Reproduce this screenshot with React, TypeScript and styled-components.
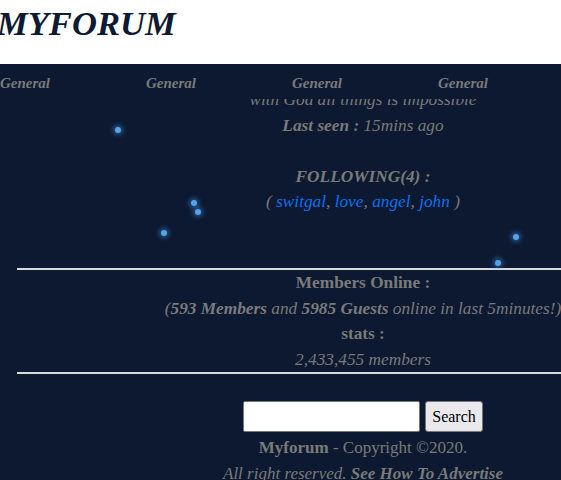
import React from "react";
import styled, { createGlobalStyle } from "styled-components";

const Global = createGlobalStyle`
  html, body { margin: 0; padding: 0; background: #ffffff; overflow: hidden; }
  body { font-family: "Liberation Serif", "Times New Roman", serif; }
`;

const Page = styled.div`
  width: 726px;
`;

const Header = styled.header`
  height: 64px;
  box-sizing: border-box;
  padding-top: 4px;
  background: #ffffff;
`;

const Title = styled.h1`
  margin: 0 0 0 -3px;
  font-size: 34.6px;
  line-height: 39px;
  font-style: italic;
  font-weight: bold;
  color: #0d1a33;
`;

const Main = styled.main`
  position: relative;
  background: #0c1931;
  min-height: 480px;
  color: #7a7a7a;
  font-size: 17.3px;
  line-height: 25.6px;
  text-align: center;
`;

const Nav = styled.nav`
  display: grid;
  grid-template-columns: repeat(4, 146px);
  height: 35px;
  box-sizing: border-box;
  padding: 8px 0 5px;
  align-items: center;
  position: relative;
  z-index: 1;
`;

const NavItem = styled.span`
  font-size: 15px;
  line-height: 22px;
  font-weight: bold;
  font-style: italic;
  text-align: left;
  color: #7a7a7a;
`;

const ProfileViewport = styled.div`
  overflow: hidden;
  padding-bottom: 53px;
`;

const Profile = styled.div`
  margin-top: -12px;
  font-style: italic;
`;

const Line = styled.div<{ $bold?: boolean }>`
  min-height: 25.6px;
  font-weight: ${(p) => (p.$bold ? "bold" : "normal")};
`;

const Link = styled.a`
  color: #0a72f0;
  text-decoration: none;
`;

const Rule = styled.hr`
  margin: 0 auto;
  width: 692px;
  border: none;
  height: 2px;
  background: #d9d9d9;
`;

const Stats = styled.section``;

const Footer = styled.footer`
  padding-top: 27px;
`;

const SearchRow = styled.form`
  display: flex;
  justify-content: center;
  align-items: center;
  gap: 5px;
  margin: 0 0 3px;
`;

const SearchInput = styled.input`
  width: 177px;
  height: 31px;
  box-sizing: border-box;
  border: 1px solid #767676;
  border-radius: 2px;
  background: #fff;
  font-family: inherit;
`;

const SearchButton = styled.button`
  height: 31px;
  box-sizing: border-box;
  padding: 0 6px;
  border: 1px solid #767676;
  border-radius: 3px;
  background: #e9e9ed;
  color: #000;
  font-family: "Liberation Serif", "Times New Roman", serif;
  font-size: 16px;
`;

const FooterLine = styled.div<{ $italic?: boolean }>`
  font-size: 17px;
  font-style: ${(p) => (p.$italic ? "italic" : "normal")};
`;

const Particle = styled.span`
  position: absolute;
  width: 6px;
  height: 6px;
  margin: -3px 0 0 -3px;
  border-radius: 50%;
  background: #55a2e4;
  box-shadow: 0 0 5px 2px rgba(60, 140, 220, 0.55);
`;

const particles = [
  [118, 66],
  [194, 139],
  [198, 148],
  [164, 169],
  [516, 173],
  [498, 199],
];

export default function App() {
  return (
    <Page>
      <Global />
      <Header>
        <Title>MYFORUM</Title>
      </Header>
      <Main>
        {particles.map(([x, y], i) => (
          <Particle key={i} style={{ left: x, top: y }} />
        ))}
        <Nav>
          <NavItem>General</NavItem>
          <NavItem>General</NavItem>
          <NavItem>General</NavItem>
          <NavItem>General</NavItem>
        </Nav>
        <ProfileViewport>
          <Profile>
            <Line>with God all things is impossible</Line>
            <Line>
              <b>Last seen :</b> 15mins ago
            </Line>
            <Line />
            <Line $bold>FOLLOWING(4) :</Line>
            <Line>
              ( <Link href="#">switgal</Link>, <Link href="#">love</Link>,{" "}
              <Link href="#">angel</Link>, <Link href="#">john</Link> )
            </Line>
          </Profile>
        </ProfileViewport>
        <Rule />
        <Stats>
          <Line $bold>Members Online :</Line>
          <Line>
            <i>
              (<b>593 Members</b> and <b>5985 Guests</b> online in last 5minutes!)
            </i>
          </Line>
          <Line $bold>stats :</Line>
          <Line>
            <i>2,433,455 members</i>
          </Line>
        </Stats>
        <Rule />
        <Footer>
          <SearchRow onSubmit={(e) => e.preventDefault()}>
            <SearchInput type="text" />
            <SearchButton type="submit">Search</SearchButton>
          </SearchRow>
          <FooterLine>
            <b>Myforum</b> - Copyright ©2020.
          </FooterLine>
          <FooterLine $italic>
            All right reserved. <b>See How To Advertise</b>
          </FooterLine>
        </Footer>
      </Main>
    </Page>
  );
}
